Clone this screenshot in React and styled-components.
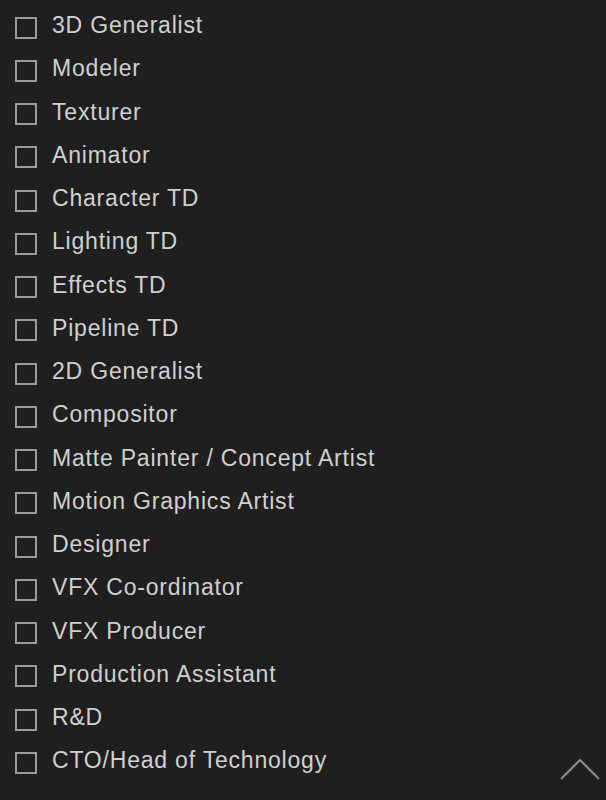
import React from "react";
import styled, { createGlobalStyle } from "styled-components";

const GlobalStyle = createGlobalStyle`
  html, body {
    margin: 0;
    padding: 0;
    background-color: #1f1f1f;
  }
  body {
    font-family: "Liberation Sans", Arial, sans-serif;
  }
`;

const Page = styled.div`
  position: relative;
  width: 606px;
  height: 800px;
  background-color: #1f1f1f;
  overflow: hidden;
`;

const List = styled.ul`
  list-style: none;
  margin: 0;
  padding: 4px 0 0 15px;
  display: flex;
  flex-direction: column;
`;

const Item = styled.li`
  display: flex;
  align-items: center;
  gap: 15px;
  height: 43.25px;
`;

const Box = styled.span`
  box-sizing: border-box;
  width: 22px;
  height: 22px;
  border: 2px solid #9c9c9c;
  margin-top: 4px;
  flex-shrink: 0;
`;

const Label = styled.span`
  font-size: 23px;
  color: #d0d0d0;
  letter-spacing: 0.8px;
`;

const TopButton = styled.button`
  position: absolute;
  right: 5px;
  bottom: 18px;
  width: 42px;
  height: 26px;
  padding: 0;
  border: none;
  background: none;
  cursor: pointer;
`;

const roles = [
  "3D Generalist",
  "Modeler",
  "Texturer",
  "Animator",
  "Character TD",
  "Lighting TD",
  "Effects TD",
  "Pipeline TD",
  "2D Generalist",
  "Compositor",
  "Matte Painter / Concept Artist",
  "Motion Graphics Artist",
  "Designer",
  "VFX Co-ordinator",
  "VFX Producer",
  "Production Assistant",
  "R&D",
  "CTO/Head of Technology",
];

const App = () => (
  <Page>
    <GlobalStyle />
    <List>
      {roles.map((role) => (
        <Item key={role}>
          <Box />
          <Label>{role}</Label>
        </Item>
      ))}
    </List>
    <TopButton aria-label="Back to top">
      <svg width="42" height="26" viewBox="0 0 42 26">
        <polyline
          points="2,23 21,4 40,23"
          fill="none"
          stroke="#8a8a8a"
          strokeWidth="2.2"
        />
      </svg>
    </TopButton>
  </Page>
);

export default App;
